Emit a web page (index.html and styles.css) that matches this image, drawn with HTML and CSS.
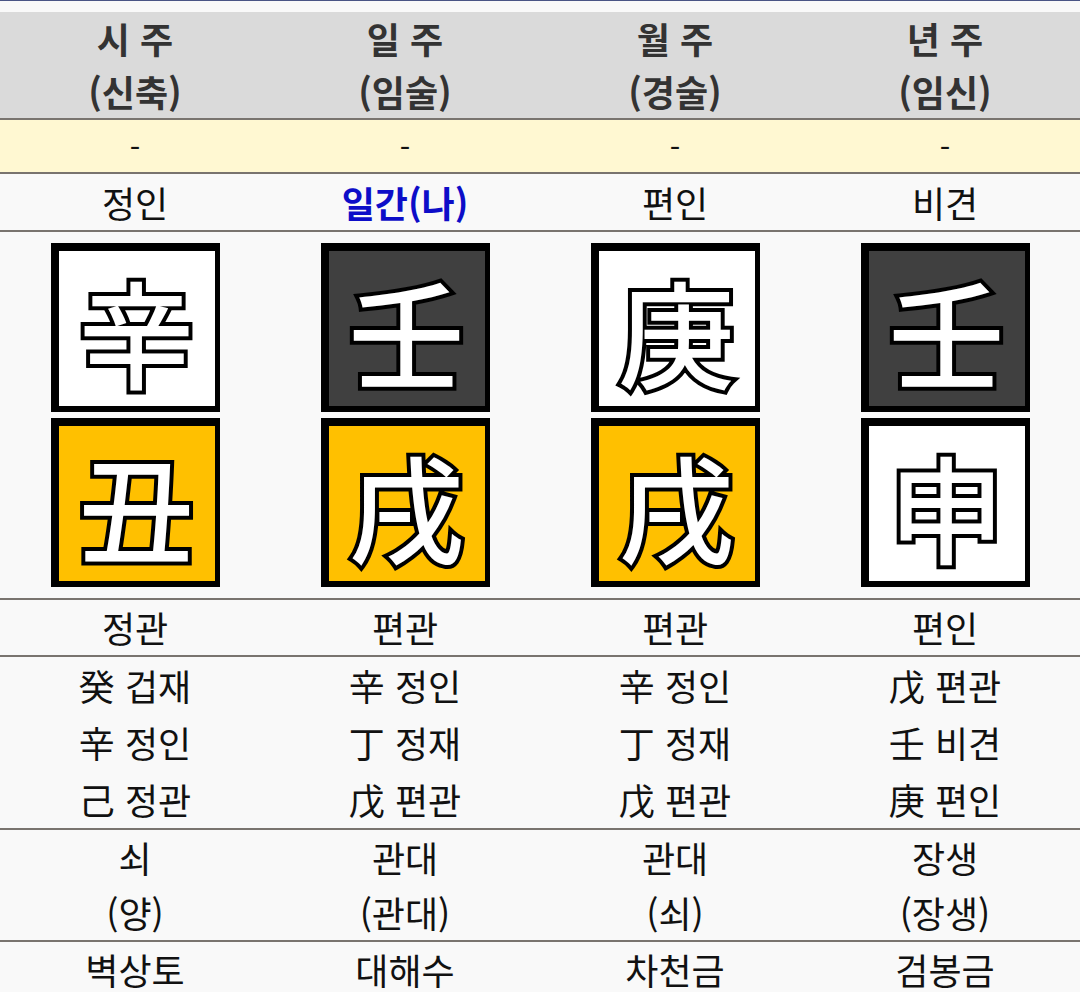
FILE: index.html
```html
<!DOCTYPE html>
<html lang="ko">
<head>
<meta charset="utf-8">
<link rel="stylesheet" href="styles.css">
</head>
<body>
<div class="topline"></div>
<div class="saju">
  <div class="row head">
    <div class="cell">시 주<br>(신축)</div>
    <div class="cell">일 주<br>(임술)</div>
    <div class="cell">월 주<br>(경술)</div>
    <div class="cell">년 주<br>(임신)</div>
  </div>
  <div class="row note">
    <div class="cell">-</div>
    <div class="cell">-</div>
    <div class="cell">-</div>
    <div class="cell">-</div>
  </div>
  <div class="row single gan">
    <div class="cell">정인</div>
    <div class="cell me">일간(나)</div>
    <div class="cell">편인</div>
    <div class="cell">비견</div>
  </div>
  <div class="row pillars">
    <div class="pillar">
      <div class="tile white">辛</div>
      <div class="tile earth">丑</div>
    </div>
    <div class="pillar">
      <div class="tile water">壬</div>
      <div class="tile earth">戌</div>
    </div>
    <div class="pillar">
      <div class="tile white">庚</div>
      <div class="tile earth">戌</div>
    </div>
    <div class="pillar">
      <div class="tile water">壬</div>
      <div class="tile white">申</div>
    </div>
  </div>
  <div class="row single ji">
    <div class="cell">정관</div>
    <div class="cell">편관</div>
    <div class="cell">편관</div>
    <div class="cell">편인</div>
  </div>
  <div class="row hidden">
    <div class="cell">癸 겁재<br>辛 정인<br>己 정관</div>
    <div class="cell">辛 정인<br>丁 정재<br>戊 편관</div>
    <div class="cell">辛 정인<br>丁 정재<br>戊 편관</div>
    <div class="cell">戊 편관<br>壬 비견<br>庚 편인</div>
  </div>
  <div class="row twelve">
    <div class="cell">쇠<br>(양)</div>
    <div class="cell">관대<br>(관대)</div>
    <div class="cell">관대<br>(쇠)</div>
    <div class="cell">장생<br>(장생)</div>
  </div>
  <div class="row last">
    <div class="cell">벽상토</div>
    <div class="cell">대해수</div>
    <div class="cell">차천금</div>
    <div class="cell">검봉금</div>
  </div>
</div>
</body>
</html>
```
FILE: styles.css
```css
html, body {
  margin: 0;
  padding: 0;
  background: #f9f9f9;
}

body {
  font-family: "Noto Sans CJK KR", "Noto Sans", sans-serif;
  color: #111;
  font-size: 36px;
}

.topline {
  height: 1px;
  background: #4a5585;
  margin-bottom: 11px;
}

.row {
  display: grid;
  grid-template-columns: repeat(4, 1fr);
  border-bottom: 2px solid #79746f;
}

.cell {
  text-align: center;
}

.head {
  background: #dadada;
  color: #333;
  font-weight: 700;
  font-size: 36px;
  line-height: 53px;
}

.note {
  background: #fff8d2;
  line-height: 52px;
  font-size: 30px;
}

.gan .cell {
  line-height: 56px;
}

.me {
  color: #0d0dc8;
  font-weight: 700;
}

.pillars {
  padding: 11px 0;
}

.pillar {
  display: flex;
  flex-direction: column;
  align-items: center;
  gap: 6px;
}

.tile {
  box-sizing: border-box;
  width: 169px;
  height: 169px;
  border-style: solid;
  border-color: #000;
  border-width: 8px 5px 6px 8px;
  display: flex;
  align-items: center;
  justify-content: center;
  font-size: 116px;
  font-weight: 500;
  line-height: 1;
  color: #fff;
  -webkit-text-stroke: 8px #000;
  paint-order: stroke fill;
  text-shadow: 0 0 2px rgba(0, 0, 0, 0.6);
}

.tile.white { background: #fff; }
.tile.water { background: #404040; }
.tile.earth { background: #ffc000; }

.ji .cell { line-height: 55px; }
.hidden .cell { line-height: 57px; }
.twelve .cell { line-height: 55px; }
.last .cell { line-height: 55px; }
```
